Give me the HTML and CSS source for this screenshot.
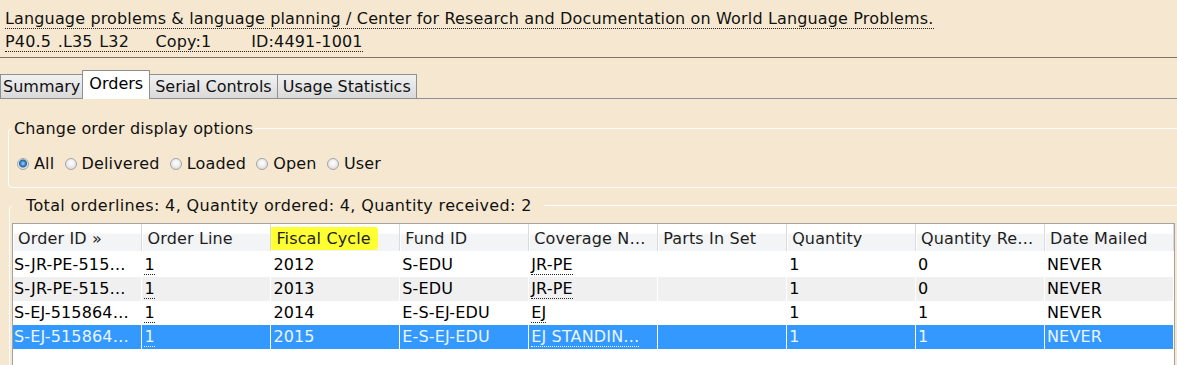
FILE: index.html
```html
<!DOCTYPE html>
<html lang="en">
<head>
  <meta charset="UTF-8">
  <title>Orders</title>
<link rel="stylesheet" href="styles.css">
</head>
<body>
  <div class="record">
    <a class="link" href="#">Language problems &amp; language planning / Center for Research and Documentation on World Language Problems.</a><br>
    <a class="link pre" href="#">P40.5 .L35 L32    Copy:1      ID:4491-1001</a>
  </div>
  <div class="rule"></div>

  <ul class="tabs">
    <li>Summary</li>
    <li class="active">Orders</li>
    <li>Serial Controls</li>
    <li>Usage Statistics</li>
  </ul>

  <fieldset class="options">
    <legend>Change order display options</legend>
    <label><input type="radio" name="show" checked>All</label>
    <label><input type="radio" name="show">Delivered</label>
    <label><input type="radio" name="show">Loaded</label>
    <label><input type="radio" name="show">Open</label>
    <label><input type="radio" name="show">User</label>
  </fieldset>

  <fieldset class="orders">
    <legend>Total orderlines: 4, Quantity ordered: 4, Quantity received: 2</legend>
    <div class="grid">
      <table>
        <thead>
          <tr>
            <th>Order ID »</th>
            <th>Order Line</th>
            <th><span class="mark">Fiscal Cycle</span></th>
            <th>Fund ID</th>
            <th>Coverage N…</th>
            <th>Parts In Set</th>
            <th>Quantity</th>
            <th>Quantity Re…</th>
            <th>Date Mailed</th>
          </tr>
        </thead>
        <tbody>
          <tr>
            <td>S-JR-PE-515…</td>
            <td><a class="link" href="#">1</a></td>
            <td>2012</td>
            <td>S-EDU</td>
            <td><a class="link" href="#">JR-PE</a></td>
            <td></td>
            <td>1</td>
            <td>0</td>
            <td>NEVER</td>
          </tr>
          <tr class="odd">
            <td>S-JR-PE-515…</td>
            <td><a class="link" href="#">1</a></td>
            <td>2013</td>
            <td>S-EDU</td>
            <td><a class="link" href="#">JR-PE</a></td>
            <td></td>
            <td>1</td>
            <td>0</td>
            <td>NEVER</td>
          </tr>
          <tr>
            <td>S-EJ-515864…</td>
            <td><a class="link" href="#">1</a></td>
            <td>2014</td>
            <td>E-S-EJ-EDU</td>
            <td><a class="link" href="#">EJ</a></td>
            <td></td>
            <td>1</td>
            <td>1</td>
            <td>NEVER</td>
          </tr>
          <tr class="selected">
            <td>S-EJ-515864…</td>
            <td><a class="link" href="#">1</a></td>
            <td>2015</td>
            <td>E-S-EJ-EDU</td>
            <td><a class="link" href="#">EJ STANDIN…</a></td>
            <td></td>
            <td>1</td>
            <td>1</td>
            <td>NEVER</td>
          </tr>
        </tbody>
      </table>
    </div>
  </fieldset>
</body>
</html>
```

FILE: styles.css
```css
body {
  margin: 0;
  background: #f6e8d0;
  font: 16px/23px "DejaVu Sans", Verdana, sans-serif;
  letter-spacing: 0.15px;
  color: #111;
  overflow: hidden;
}

.link {
  color: inherit;
  text-decoration: none;
  border-bottom: 1px dotted #222;
}
.pre {
  white-space: pre;
  word-spacing: 1.4px;
}

.record {
  padding: 7px 5px 4px;
}

.rule {
  height: 1px;
  background: #7d7662;
}

/* tabs */
.tabs {
  display: flex;
  align-items: flex-end;
  list-style: none;
  margin: 13px 0 0;
  padding: 0;
  border-bottom: 1px solid #8c8c9a;
  height: 27px;
  letter-spacing: 0;
}
.tabs li {
  height: 23px;
  line-height: 24px;
  padding: 0 2px;
  border: 1px solid #8e8f90;
  border-bottom: none;
  background: linear-gradient(#f2f2f2, #d9d9d9);
}
.tabs li + li {
  margin-left: -1px;
}
.tabs li.active {
  height: 28px;
  line-height: 26px;
  padding: 0 6px;
  margin-bottom: -1px;
  background: #fff;
  color: #000;
}
.tabs li:nth-child(3),
.tabs li:nth-child(4) {
  padding: 0 5px;
}

/* fieldsets */
fieldset {
  border: 1px solid #fdfdfd;
  border-radius: 4px;
  margin: 0 -20px 0 8px;
}
.options {
  margin-top: 18px;
  padding: 12px 3px 11px;
}
.options legend {
  padding: 0 2px;
}
.options label {
  display: inline-flex;
  align-items: center;
  margin: 0 0 0 5px;
}
.options input {
  appearance: none;
  width: 12px;
  height: 12px;
  margin: 0 5px 0 0;
  border: 1px solid #a5a5a5;
  border-radius: 50%;
  background: radial-gradient(circle at 50% 40%, #fff 0, #f0f0f0 40%, #cfcfcf 100%);
}
.options input:checked {
  background: radial-gradient(circle at 50% 45%, #9fd0f5 0, #3b85c8 2.5px, #1f5f9e 3.5px, #e6e6e6 4.5px, #d0d0d0 100%);
}

.orders {
  margin-top: 6px;
  margin-left: 9px;
  padding: 6px 2px 0 2px;
}
.orders legend {
  padding: 0 12px 0 14px;
  letter-spacing: 0.35px;
}

/* grid */
.grid {
  width: 1161px;
  height: 160px;
  background: #fff;
  border: 1px solid #a3a3a3;
  border-bottom: none;
}
table {
  width: 100%;
  table-layout: fixed;
  border-collapse: collapse;
}
th,
td {
  white-space: nowrap;
  overflow: hidden;
  text-align: left;
  font-weight: normal;
}
th {
  height: 24px;
  padding: 3px 5px 0;
  color: #1e1e1e;
  background: linear-gradient(#fff 0, #fff 35%, #f3f4f6 36%, #f3f4f6 100%);
  border-right: 1px solid #d9dbde;
  border-bottom: 1px solid #e3e4e6;
  box-shadow: inset 1px 0 0 #fff;
}
thead tr {
  border-bottom: 2px solid #fff;
}
.mark {
  display: inline-block;
  background: #ffff33;
  border-radius: 3px;
  margin-left: -7px;
  padding: 0 7px 0 7px;
  line-height: 23px;
}
td {
  height: 24px;
  padding: 0 2px;
  border-right: 1px solid #fff;
  color: #000;
}
td:first-child {
  padding-left: 1px;
}
tr.odd td {
  background: #f0f0f0;
}
tr.selected td {
  background: #3399ff;
  color: #eaf4ff;
}
tr.selected .link {
  border-bottom-color: #eaf4ff;
}
```
